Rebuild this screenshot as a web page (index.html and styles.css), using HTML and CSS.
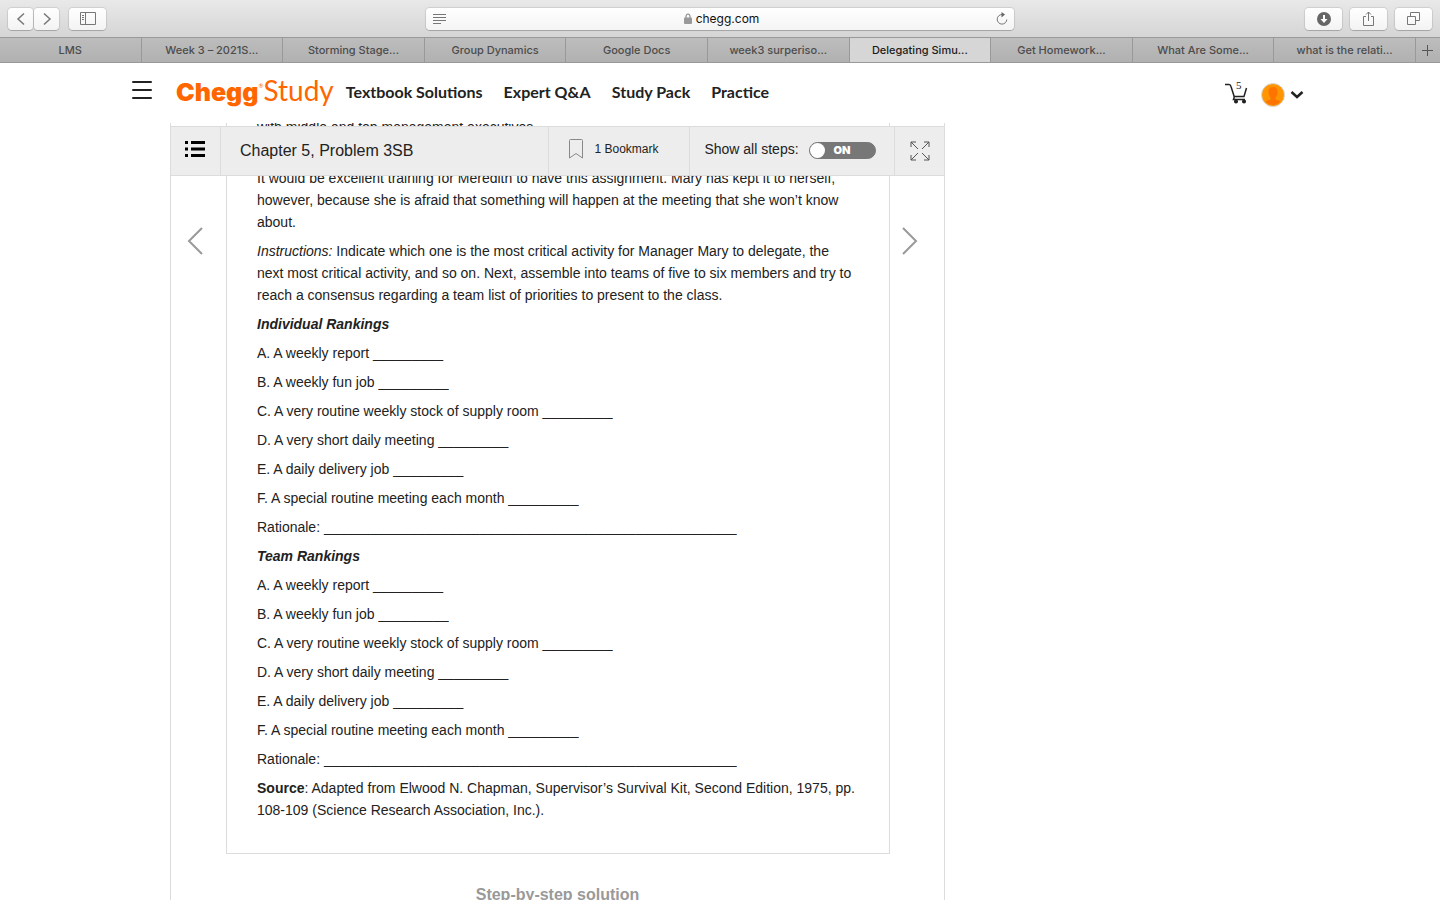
FILE: index.html
```html
<!DOCTYPE html>
<html lang="en">
<head>
    <meta charset="UTF-8">
    <meta name="viewport" content="width=device-width, initial-scale=1.0">
    <title>Delegating Simulation | Chegg.com</title>
    <link rel="stylesheet" href="styles.css">
</head>
<body>
    <div class="browser">
        <div class="toolbar">
            <div class="tools">
                <div class="history">
                    <button class="tool small" aria-label="Back"><svg width="10" height="14" viewBox="0 0 10 14"><path d="M8 1.5 2 7l6 5.500" /></svg></button>
                    <button class="tool small" aria-label="Forward"><svg width="10" height="14" viewBox="0 0 10 14"><path d="M2 1.500 8 7l-6 5.500" /></svg></button>
                </div>
                <button class="tool" aria-label="Sidebar">
                    <svg class="thin" width="16" height="13" viewBox="0 0 16 13"><path d="M.5.5h15v12H.5zM5.500.5v12M2 3.500h2M2 5.500h2M2 7.500h2" /></svg>
                </button>
            </div>
            <div class="address">
                <svg width="14" height="12" viewBox="0 0 14 12"><path d="M0 1.500h13M0 4.500h13M0 7.500h13M0 10.500h8" /></svg>
                <span class="url"><svg width="8" height="11" viewBox="0 0 8 11"><path d="M2 5V3a2 2 0 0 1 4 0v2" /><rect y="4.500" width="8" height="6.500" rx="1" /></svg>chegg.com</span>
                <svg width="12" height="14" viewBox="0 0 12 14"><path d="M7 2.500H6a4.800 4.800 0 1 0 4.800 5" /><path class="solid" d="M5.500 0 9 2.500 5.500 5.500z" /></svg>
            </div>
            <div class="tools right">
                <button class="tool" aria-label="Downloads"><svg width="14" height="14" viewBox="0 0 14 14"><circle class="solid" cx="7" cy="7" r="7" /><path class="arrow" d="M7 3v5" /><path class="arrow-head" d="M3.500 7h7L7 11z" /></svg></button>
                <button class="tool" aria-label="Share"><svg class="thin" width="13" height="16" viewBox="0 0 13 16"><path d="M4 5.500H1.500v9h10v-9H9M6.500 10V1M4 3.500 6.500 1 9 3.500" /></svg></button>
                <button class="tool" aria-label="Show tabs"><svg class="thin" width="13" height="13" viewBox="0 0 13 13"><path d="M.5 4.500h8v8h-8zM3.500 4.500v-4h9v8h-4" /></svg></button>
            </div>
        </div>
        <div class="tabs">
            <button class="tab">LMS</button>
            <button class="tab">Week 3 – 2021S...</button>
            <button class="tab">Storming Stage...</button>
            <button class="tab">Group Dynamics</button>
            <button class="tab">Google Docs</button>
            <button class="tab">week3 surperiso...</button>
            <button class="tab active">Delegating Simu...</button>
            <button class="tab">Get Homework...</button>
            <button class="tab">What Are Some...</button>
            <button class="tab">what is the relati...</button>
            <button class="new-tab" aria-label="New tab"><svg width="11" height="11" viewBox="0 0 11 11"><path d="M5.500 0v11M0 5.500h11" /></svg></button>
        </div>
    </div>

    <header class="header">
        <button class="menu" aria-label="Menu"><svg width="22" height="20" viewBox="0 0 22 20"><path d="M2 2h18M2 10h18M2 18h18" /></svg></button>
        <a href="#" class="logo"><b>Chegg</b><sup>®</sup><span>Study</span></a>
        <nav class="nav">
            <a href="#">Textbook Solutions</a>
            <a href="#">Expert Q&amp;A</a>
            <a href="#">Study Pack</a>
            <a href="#">Practice</a>
        </nav>
        <div class="account">
            <a href="#" class="cart" aria-label="Cart">
                <svg width="24" height="22" viewBox="0 0 24 22"><path d="M0 2.500h4q1.500 0 2 2l3 9.500q.5 1.500-.5 3.500h11.500M9.500 14.500h9.500L21.500 6" /><circle cx="11" cy="19.500" r="1.300" /><circle cx="19" cy="19.500" r="1.300" /></svg>
                <span class="count">5</span>
            </a>
            <button class="user" aria-label="Account">
                <svg width="24" height="24" viewBox="0 0 24 24"><circle cx="12" cy="12" r="11.500" fill="#ff9500" stroke="#d8d8d8" /><path d="M12 4c3 0 4.500 2 4.500 5 0 2.500-1 4.500-2 5.500v2l5 1.700c-4 5.300-11 5.300-15 0l5-1.700v-2c-1-1-2-3-2-5.500 0-3 1.500-5 4.500-5z" fill="#ff7400" /></svg>
                <svg width="14" height="10" viewBox="0 0 14 10"><path d="m1.500 2 5.500 5 5.500-5" fill="none" stroke="#222" stroke-width="2.500" /></svg>
            </button>
        </div>
    </header>

    <div class="page">
        <main class="main">
            <div class="problem-bar">
                <button class="contents" aria-label="Table of contents"><svg width="20" height="16" viewBox="0 0 20 16"><path d="M0 1.500h3M6 1.500h14M0 8h3M6 8h14M0 14.500h3M6 14.500h14" /></svg></button>
                <h1 class="chapter">Chapter 5, Problem 3SB</h1>
                <button class="bookmark"><svg width="14" height="20" viewBox="0 0 14 20"><path d="M1.500.5h11q1 0 1 1v17.500L7 14.500.5 19V1.500q0-1 1-1z" /></svg>1 Bookmark</button>
                <div class="steps">
                    <label for="allSteps">Show all steps:</label>
                    <span class="switch"><input type="checkbox" id="allSteps" checked><span>ON</span></span>
                </div>
                <button class="expand" aria-label="Full screen"><svg width="20" height="20" viewBox="0 0 20 20"><path d="M8 8 1 1m0 5V1h5M12 8l7-7m-5 0h5v5M8 12l-7 7m0-5v5h5M12 12l7 7m-5 0h5v-5" /></svg></button>
            </div>

            <div class="problem-row">
                <button class="pager prev" aria-label="Previous problem"><svg width="16" height="28" viewBox="0 0 16 28"><path d="M15 1 2 14l13 13" /></svg></button>
                <article class="problem">
                    <p class="under-bar">with middle and top management executives.</p>
                    <p>It would be excellent training for Meredith to have this assignment. Mary has kept it to herself, however, because she is afraid that something will happen at the meeting that she won’t know about.</p>
                    <p><i>Instructions:</i> Indicate which one is the most critical activity for Manager Mary to delegate, the next most critical activity, and so on. Next, assemble into teams of five to six members and try to reach a consensus regarding a team list of priorities to present to the class.</p>
                    <h2>Individual Rankings</h2>
                    <p>A. A weekly report _________</p>
                    <p>B. A weekly fun job _________</p>
                    <p>C. A very routine weekly stock of supply room _________</p>
                    <p>D. A very short daily meeting _________</p>
                    <p>E. A daily delivery job _________</p>
                    <p>F. A special routine meeting each month _________</p>
                    <p>Rationale: _____________________________________________________</p>
                    <h2>Team Rankings</h2>
                    <p>A. A weekly report _________</p>
                    <p>B. A weekly fun job _________</p>
                    <p>C. A very routine weekly stock of supply room _________</p>
                    <p>D. A very short daily meeting _________</p>
                    <p>E. A daily delivery job _________</p>
                    <p>F. A special routine meeting each month _________</p>
                    <p>Rationale: _____________________________________________________</p>
                    <p><b>Source</b>: Adapted from Elwood N. Chapman, Supervisor’s Survival Kit, Second Edition, 1975, pp. 108-109 (Science Research Association, Inc.).</p>
                </article>
                <button class="pager next" aria-label="Next problem"><svg width="16" height="28" viewBox="0 0 16 28"><path d="m1 1 13 13L1 27" /></svg></button>
            </div>

            <h2 class="solution-title">Step-by-step solution</h2>
        </main>
    </div>
</body>
</html>
```
FILE: styles.css
```css
* {
    box-sizing: border-box;
}

body {
    margin: 0;
    height: 100vh;
    display: flex;
    flex-direction: column;
    overflow: hidden;
    background: #fff;
    color: #222;
    font-family: "Liberation Sans", Arial, sans-serif;
    font-size: 14px;
}

button {
    margin: 0;
    padding: 0;
    border: none;
    background: none;
    color: inherit;
    font: inherit;
    cursor: pointer;
}

a {
    color: inherit;
    text-decoration: none;
}

svg {
    display: block;
    flex: none;
}

/* browser window */
.browser {
    flex: none;
    font-family: Inter, sans-serif;
}

.toolbar {
    height: 37px;
    padding: 0 8px;
    display: grid;
    grid-template-columns: 1fr minmax(200px, 588px) 1fr;
    align-items: center;
    background: linear-gradient(#e9e9e9, #d5d5d5);
}

.tools {
    display: flex;
    gap: 8px;
}

.right {
    justify-content: flex-end;
}

.history {
    display: flex;
    gap: 1px;
    margin-right: 2px;
}

.tool {
    width: 37px;
    height: 22px;
    display: flex;
    align-items: center;
    justify-content: center;
    background: linear-gradient(#fff, #f3f3f3);
    border-radius: 4px;
    box-shadow: 0 0 1px 1px rgba(0, 0, 0, 0.1), 0 1px 0 rgba(0, 0, 0, 0.15);
}

.small {
    width: 25px;
}

.toolbar svg {
    fill: none;
    stroke: #777;
    stroke-width: 1.5;
}

.toolbar .thin,
.address svg {
    stroke-width: 1;
}

.toolbar .solid {
    fill: #666;
    stroke: none;
}

.arrow {
    stroke: #fff;
    stroke-width: 2;
}

.arrow-head {
    fill: #fff;
    stroke: none;
}

.address {
    height: 22px;
    padding: 0 6px 0 7px;
    display: flex;
    align-items: center;
    justify-content: space-between;
    background: linear-gradient(#fff, #f4f4f4);
    border-radius: 4px;
    box-shadow: 0 0 1px 1px rgba(0, 0, 0, 0.1), 0 1px 0 rgba(0, 0, 0, 0.15);
}

.url {
    display: flex;
    align-items: center;
    gap: 4px;
    color: #111;
    font-size: 12px;
}

.url rect {
    fill: #999;
    stroke: none;
}

.tabs {
    height: 26px;
    display: flex;
    border-top: 1px solid #999;
    border-bottom: 1px solid #999;
    background: linear-gradient(#bdbdbd, #b1b1b1);
}

.tab {
    flex: 1;
    min-width: 0;
    border-right: 1px solid #999;
    color: #4c4c4c;
    font-size: 11px;
    font-weight: 500;
    white-space: nowrap;
    overflow: hidden;
}

.active {
    background: #d6d6d6;
    color: #1b1b1b;
}

.new-tab {
    width: 24px;
    display: flex;
    align-items: center;
    justify-content: center;
}

.new-tab svg {
    stroke: #555;
}

/* site header */
.header {
    flex: none;
    height: 60px;
    padding: 0 136px 4px 131px;
    display: flex;
    align-items: center;
}

.menu {
    margin: 0 23px 2px 0;
}

.menu svg {
    stroke: #222;
    stroke-width: 2;
    stroke-linecap: round;
}

.logo {
    display: flex;
    align-items: baseline;
    color: #ff6600;
    font-family: Lato, sans-serif;
    font-size: 28px;
    line-height: 34px;
}

.logo b {
    font-family: Inter, sans-serif;
    font-size: 25px;
    font-weight: 900;
}

.logo sup {
    align-self: flex-start;
    font-size: 6px;
    line-height: 26px;
}

.nav {
    display: flex;
    gap: 21px;
    margin-left: 12px;
    font-family: Lato, sans-serif;
    font-size: 16px;
    font-weight: 700;
}

.account {
    margin: 4px 0 0 auto;
    display: flex;
    align-items: center;
    gap: 12px;
}

.cart {
    position: relative;
}

.cart svg {
    fill: none;
    stroke: #222;
    stroke-width: 1.5;
}

.cart circle {
    fill: #222;
}

.count {
    position: absolute;
    top: -2px;
    left: 11px;
    font-family: "Liberation Serif", serif;
    font-size: 11px;
    line-height: 10px;
}

.user {
    display: flex;
    align-items: center;
    gap: 5px;
    margin-top: 4px;
}

/* problem page */
.page {
    flex: 1;
    min-height: 0;
    padding: 0 170px;
    overflow: hidden;
}

.main {
    display: flow-root;
    position: relative;
    max-width: 775px;
    border: 1px solid #dcdcdc;
    border-width: 0 1px;
}

/* floats over the scrolled text */
.problem-bar {
    position: absolute;
    top: 3px;
    left: 0;
    right: 0;
    height: 50px;
    display: flex;
    background: #ededed;
    border: 1px solid #dcdcdc;
    border-width: 1px 0;
}

.problem-bar > * {
    display: flex;
    align-items: center;
    justify-content: center;
    border-right: 1px solid #dcdcdc;
}

.problem-bar svg {
    fill: none;
    stroke: #555;
}

.contents {
    width: 50px;
    padding: 0 2px 4px 0;
}

.problem-bar .contents svg {
    stroke: #000;
    stroke-width: 3;
}

.problem-bar .chapter {
    flex: 1;
    justify-content: flex-start;
    margin: 0;
    padding-left: 19px;
    font-size: 16px;
    font-weight: 400;
}

.bookmark {
    width: 141px;
    gap: 11px;
    padding: 0 10px 4px 0;
    font-size: 12px;
}

.problem-bar .bookmark svg {
    stroke: #888;
}

.steps {
    width: 205px;
    gap: 10px;
    padding: 0 4px 2px 0;
}

.steps label {
    padding-bottom: 2px;
}

.switch {
    position: relative;
    display: flex;
}

.switch input {
    appearance: none;
    margin: 0;
    width: 67px;
    height: 17px;
    border: 1px solid #777;
    border-radius: 9px;
    background: #777;
}

.switch input::before {
    content: "";
    display: block;
    width: 15px;
    height: 15px;
    border-radius: 50%;
    background: #fff;
}

.switch span {
    position: absolute;
    left: 25px;
    top: 0;
    color: #fff;
    font-family: Inter, sans-serif;
    font-size: 11px;
    font-weight: 900;
    line-height: 17px;
    pointer-events: none;
}

.problem-bar .expand {
    width: 49px;
    border-right: none;
}

.problem-row {
    display: grid;
    grid-template-columns: 55px 1fr 54px;
    align-items: start;
    margin-top: -7px;
}

.pager {
    display: flex;
    padding-top: 111px;
}

.prev {
    padding-left: 16px;
}

.next {
    padding-left: 12px;
}

.pager svg {
    fill: none;
    stroke: #999;
    stroke-width: 2;
}

.problem {
    padding: 0 32px 25px 30px;
    border: 1px solid #dcdcdc;
    border-top: none;
    line-height: 22px;
}

.problem p,
.problem h2 {
    margin: 0 0 7px;
}

.problem h2 {
    font-size: 14px;
    font-style: italic;
}

.problem .under-bar {
    margin-bottom: 29px;
}

.solution-title {
    margin: 30px 0;
    color: #999;
    font-size: 16px;
    line-height: 22px;
    text-align: center;
}
```
